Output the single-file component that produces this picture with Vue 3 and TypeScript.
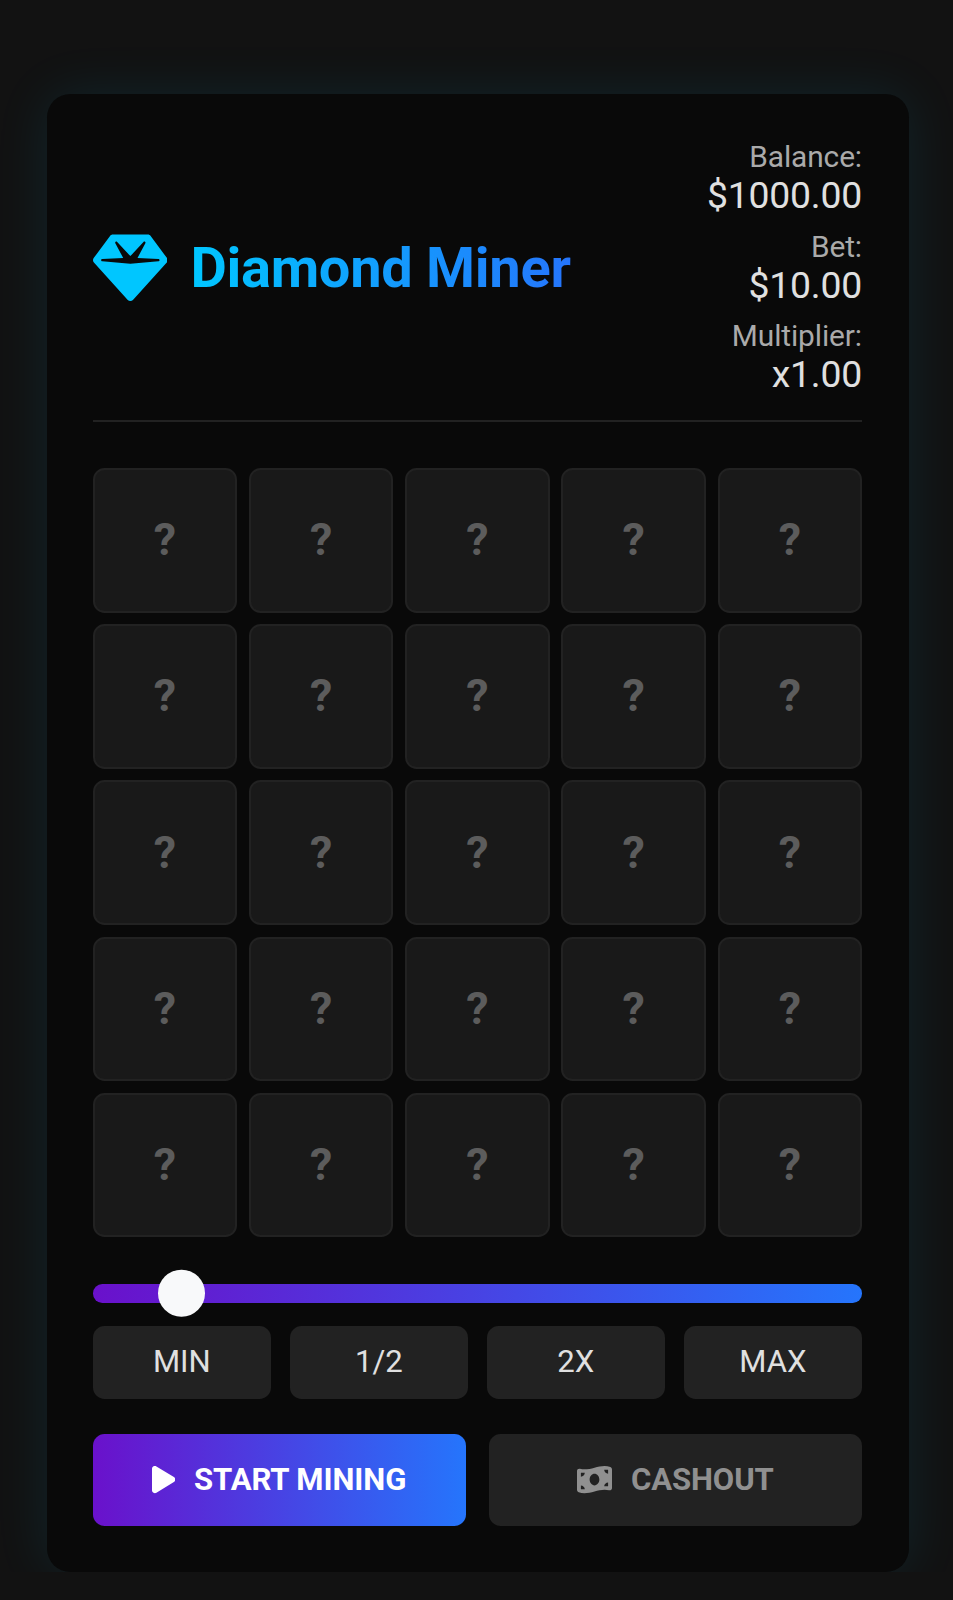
<script setup lang="ts">
import { ref, computed } from 'vue'

interface Stat {
  label: string
  value: string
}

const balance = ref(1000)
const bet = ref(10)
const multiplier = ref(1)
const sliderPercent = ref(8.9)

const stats = computed<Stat[]>(() => [
  { label: 'Balance:', value: `$${balance.value.toFixed(2)}` },
  { label: 'Bet:', value: `$${bet.value.toFixed(2)}` },
  { label: 'Multiplier:', value: `x${multiplier.value.toFixed(2)}` },
])

const tiles: number[] = Array.from({ length: 25 }, (_, i) => i)
const betButtons: string[] = ['MIN', '1/2', '2X', 'MAX']
</script>

<template>
  <main class="game">
    <header class="header">
      <div class="brand">
        <svg class="gem" viewBox="0 0 512 512" aria-hidden="true">
          <path
            d="M116.7 33.8c4.5-6.1 11.7-9.8 19.3-9.8H376c7.6 0 14.8 3.6 19.3 9.8l112 152c6.8 9.2 6.1 21.9-1.5 30.4l-232 256c-4.5 5-11 7.9-17.8 7.9s-13.2-2.9-17.8-7.9l-232-256c-7.7-8.5-8.3-21.2-1.5-30.4l112-152zm38.5 39.8c-3.3 2.5-4.2 7-2.1 10.5l54 101L63.3 192c-4.1 .3-7.3 3.8-7.3 8s3.2 7.6 7.3 8l192 16c.4 0 .9 0 1.3 0l192-16c4.1-.3 7.3-3.8 7.3-8s-3.2-7.6-7.3-8L304.9 185.1l54-101c2.1-3.5 1.2-8.1-2.1-10.5s-7.9-2-10.7 1L256 172.2 165.9 74.6c-2.8-3-7.4-3.4-10.7-1z"
          />
        </svg>
        <h1 class="title">Diamond Miner</h1>
      </div>
      <div class="stats">
        <div v-for="stat in stats" :key="stat.label" class="stat">
          <div class="stat-label">{{ stat.label }}</div>
          <div class="stat-value">{{ stat.value }}</div>
        </div>
      </div>
    </header>

    <section class="grid">
      <div v-for="tile in tiles" :key="tile" class="tile"><span>?</span></div>
    </section>

    <div class="slider">
      <div class="thumb" :style="{ left: sliderPercent + '%' }"></div>
    </div>

    <div class="bet-buttons">
      <button v-for="label in betButtons" :key="label" class="bet-button">{{ label }}</button>
    </div>

    <div class="actions">
      <button class="action start">
        <svg class="play" viewBox="0 0 384 512" aria-hidden="true">
          <path
            d="M73 39c-14.8-9.1-33.4-9.4-48.5-.9S0 62.6 0 80V432c0 17.4 9.4 33.4 24.5 41.9s33.7 8.1 48.5-.9L361 297c14.3-8.7 23-24.2 23-41s-8.7-32.2-23-41L73 39z"
          />
        </svg>
        <span>START MINING</span>
      </button>
      <button class="action cashout">
        <svg class="money" viewBox="0 0 576 512" aria-hidden="true">
          <path
            d="M0 112.5V422.3c0 18 10.1 35 27 41.3c87 32.5 174 10.3 261-11.9c79.8-20.3 159.6-40.7 239.3-18.9c23 6.3 48.7-9.5 48.7-33.4V89.7c0-18-10.1-35-27-41.3C462 15.9 375 38.1 288 60.3C208.2 80.6 128.4 100.9 48.7 79.1C25.6 72.8 0 88.6 0 112.5zM288 352c-44.2 0-80-43-80-96s35.8-96 80-96s80 43 80 96s-35.8 96-80 96zM64 352c35.3 0 64 28.7 64 64H64V352zm64-208c0 35.3-28.7 64-64 64V144h64zM512 304v64H448c0-35.3 28.7-64 64-64zM448 96h64v64c-35.3 0-64-28.7-64-64z"
          />
        </svg>
        <span>CASHOUT</span>
      </button>
    </div>
  </main>
</template>

<style>
body {
  background: #121212;
  overflow: hidden;
}
</style>

<style scoped>
.game {
  box-sizing: border-box;
  width: 862px;
  height: 1477.5px;
  margin: 94.3px 0 0 46.7px;
  padding: 46.5px 46.7px 46.5px 46px;
  border-radius: 23.3px;
  background: #090909;
  box-shadow: 0 0 54px rgba(0, 198, 255, 0.1);
  color: #e0e0e0;
  font-family: Roboto, sans-serif;
}

.header {
  display: flex;
  justify-content: space-between;
  align-items: center;
  box-sizing: border-box;
  height: 281.3px;
  padding-bottom: 25.3px;
  border-bottom: 2px solid #222;
}

.brand {
  display: flex;
  align-items: center;
  gap: 23px;
}

.gem {
  width: 74.7px;
  height: 74.7px;
  margin-top: 2px;
  fill: #00c6ff;
}

.title {
  margin: 0;
  font-size: 56px;
  font-weight: 700;
  line-height: 66px;
  letter-spacing: -0.3px;
  white-space: nowrap;
  background: linear-gradient(to right, #00c6ff, #2575fc);
  -webkit-background-clip: text;
  background-clip: text;
  color: transparent;
}

.stats {
  display: flex;
  flex-direction: column;
  gap: 11.67px;
  text-align: right;
}

.stat-label {
  font-size: 29.87px;
  line-height: 35px;
  letter-spacing: -0.1px;
  color: #aaa;
}

.stat-value {
  font-size: 37.33px;
  line-height: 43px;
  letter-spacing: -0.2px;
}

.grid {
  display: grid;
  grid-template-columns: repeat(5, 1fr);
  gap: 11.67px;
  margin-top: 45.9px;
}

.tile {
  box-sizing: border-box;
  display: flex;
  align-items: center;
  justify-content: center;
  aspect-ratio: 1;
  border: 2px solid #222;
  border-radius: 11.67px;
  background: #191919;
  color: #5c5c5c;
  font-size: 44.8px;
  font-weight: 700;
}

.tile span,
.action span {
  padding-bottom: 1px;
}

.slider {
  position: relative;
  height: 18.67px;
  margin-top: 46.5px;
  border-radius: 9.33px;
  background: linear-gradient(to right, #6a11cb, #2575fc);
}

.thumb {
  position: absolute;
  top: 50%;
  width: 46.7px;
  height: 46.7px;
  margin-left: -3.3px;
  border-radius: 50%;
  background: #f8f9fa;
  transform: translateY(-50%);
}

.bet-buttons {
  display: grid;
  grid-template-columns: repeat(4, 1fr);
  gap: 18.67px;
  margin-top: 23.1px;
}

.bet-button {
  height: 73px;
  padding: 0 0 2px;
  border: 0;
  border-radius: 11.67px;
  background: #222;
  color: #e0e0e0;
  font: 400 31.1px Roboto, sans-serif;
}

.actions {
  display: grid;
  grid-template-columns: 1fr 1fr;
  gap: 23.3px;
  margin-top: 35.4px;
}

.action {
  display: flex;
  align-items: center;
  justify-content: center;
  gap: 18.67px;
  height: 91.7px;
  padding: 0;
  border: 0;
  border-radius: 11.67px;
  font: 700 31.1px Roboto, sans-serif;
  letter-spacing: -0.1px;
}

.action svg {
  height: 31.1px;
  fill: currentColor;
}

.play {
  width: 23.3px;
}

.money {
  width: 35px;
}

.start {
  background: linear-gradient(to right, #6a11cb, #2575fc);
  color: #fff;
}

.cashout {
  background: #222;
  color: #909090;
}
</style>
